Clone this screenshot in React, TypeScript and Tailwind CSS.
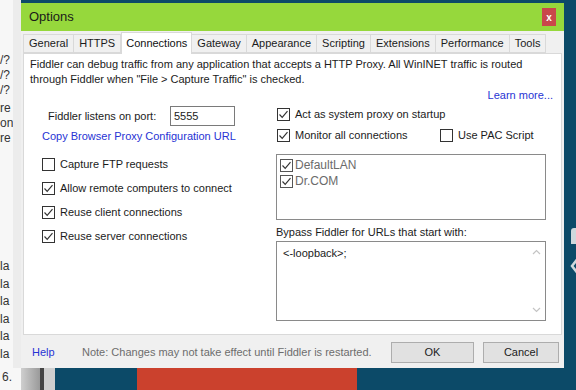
import React from 'react';

const tabs = ['General', 'HTTPS', 'Connections', 'Gateway', 'Appearance', 'Scripting', 'Extensions', 'Performance', 'Tools'];

const Check: React.FC<{ on?: boolean; gray?: boolean }> = ({ on, gray }) => (
  <svg width="13" height="13" viewBox="0 0 13 13" className="shrink-0">
    <rect x="0.5" y="0.5" width="12" height="12" fill="#fff" stroke={gray ? '#555' : '#333'} />
    {on && <path d="M2.5 6.5 L5.2 9.3 L10.5 3.2" fill="none" stroke="#333" strokeWidth="1.2" />}
  </svg>
);

const CheckRow: React.FC<{ on?: boolean; label: string }> = ({ on, label }) => (
  <div className="flex h-[24px] items-center gap-[5px]">
    <Check on={on} />
    <span>{label}</span>
  </div>
);

export default function App() {
  const side = ['/?', '/?', '/?', 're', 'on', 're'];
  const side2 = ['la', 'la', 'la', 'la', 'la', 'la'];
  return (
    <div
      className="relative h-[390px] w-[576px] overflow-hidden bg-[#0c4a68] text-[11px] text-[#1b1b1b]"
      style={{ fontFamily: '"Liberation Sans", Arial, sans-serif' }}
    >
      {/* desktop behind the dialog */}
      <div className="absolute left-0 top-0 flex h-[368px] w-[21px] bg-[#f7f7f7]">
        <div className="flex w-[13px] flex-col text-[12px] leading-[15px] text-[#333]">
          <div className="mt-[53px]">
            {side.slice(0, 3).map((s, i) => (
              <div key={i}>{s}</div>
            ))}
            <div className="mt-[3px]">
              {side.slice(3).map((s, i) => (
                <div key={i}>{s}</div>
              ))}
            </div>
          </div>
          <div className="mt-[112px] leading-[17.5px]">
            {side2.map((s, i) => (
              <div key={i}>{s}</div>
            ))}
          </div>
        </div>
        <div className="w-[8px] bg-[#ececec]" />
      </div>
      <div className="absolute bottom-0 left-0 flex h-[22px] w-[576px]">
        <div className="w-[21px] bg-[#f7f7f7] pl-[2px] text-[12px] text-[#333]">6.</div>
        <div className="w-[19px] bg-gradient-to-r from-[#cfcfcf] to-[#9a9a9a]" />
        <div className="w-[4px] bg-[#444]" />
        <div className="w-[11px] bg-[#cfcfcf]" />
        <div className="w-[82px] bg-[#0c4a68]" />
        <div className="w-[220px] bg-[#cb412d]" />
        <div className="flex-1 bg-[#0c4a68]" />
      </div>
      <div className="absolute right-0 top-[228px] h-[16px] w-[5px] rounded-tl-[3px] bg-[#cfd8dc]" />
      <div className="absolute right-0 top-[256px] h-[20px] w-[6px] overflow-hidden">
        <svg width="10" height="20" viewBox="0 0 10 20">
          <path d="M9 1 L2 10 L9 19" fill="none" stroke="#cfd8dc" strokeWidth="2.5" />
        </svg>
      </div>

      {/* dialog */}
      <div className="absolute left-[21px] top-[3px] flex h-[365px] w-[543px] flex-col bg-[#f0f0f0]">
        <div className="flex h-[28px] items-center justify-between bg-[#96d83c] pl-[8px] pr-[8px]">
          <span className="text-[13px] text-[#1a1a1a]">Options</span>
          <div className="flex h-[18px] w-[14px] items-center justify-center bg-[#c9474b] text-[10px] font-bold text-white">x</div>
        </div>

        <div className="flex h-[22px] items-end pl-[2px] pt-[2px]">
          {tabs.map((t) =>
            t === 'Connections' ? (
              <div key={t} className="relative -mb-px flex h-[22px] items-center border border-b-0 border-[#d9d9d9] bg-white px-[4px] text-[#111]">
                {t}
              </div>
            ) : (
              <div key={t} className="flex h-[19px] items-center border border-l-0 border-[#d9d9d9] bg-[#f0f0f0] px-[5px] first:border-l">
                {t}
              </div>
            )
          )}
        </div>

        <div className="mx-[2px] flex h-[282px] flex-col border border-[#d9d9d9] bg-white px-[6px]">
          <p className="mt-[3px] leading-[15px]">
            Fiddler can debug traffic from any application that accepts a HTTP Proxy. All WinINET traffic is routed through Fiddler when "File &gt; Capture Traffic" is checked.
          </p>
          <div className="flex h-[14px] justify-end pr-[2px] text-[#2733d4]">Learn more...</div>
          <div className="mt-[4px] flex">
            <div className="flex w-[246px] flex-col">
              <div className="flex h-[22px] items-center pl-[18px]">
                <span className="w-[122px]">Fiddler listens on port:</span>
                <div className="flex h-[20px] w-[65px] items-center border border-[#7a7a7a] pl-[3px]">5555</div>
              </div>
              <div className="flex h-[18px] items-center pl-[12px] text-[#2733d4]">Copy Browser Proxy Configuration URL</div>
              <div className="mt-[7px] pl-[12px]">
                <CheckRow label="Capture FTP requests" />
                <CheckRow on label="Allow remote computers to connect" />
                <CheckRow on label="Reuse client connections" />
                <CheckRow on label="Reuse server connections" />
              </div>
            </div>
            <div className="flex w-[270px] flex-col">
              <div className="flex h-[18px] items-center gap-[5px] pl-[1px]">
                <Check on />
                <span>Act as system proxy on startup</span>
              </div>
              <div className="mt-[3px] flex h-[18px] items-center pl-[1px]">
                <div className="flex w-[163px] items-center gap-[5px]">
                  <Check on />
                  <span>Monitor all connections</span>
                </div>
                <div className="flex items-center gap-[5px]">
                  <Check />
                  <span>Use PAC Script</span>
                </div>
              </div>
              <div className="mt-[10px] flex h-[66px] flex-col border border-[#8a8a8a] pl-[3px] pt-[2px] text-[12px] leading-[16px] text-[#6b6b6b]">
                <div className="flex items-center gap-[2px]">
                  <Check on gray />
                  <span>DefaultLAN</span>
                </div>
                <div className="flex items-center gap-[2px]">
                  <Check on gray />
                  <span>Dr.COM</span>
                </div>
              </div>
              <div className="mt-[3px] flex h-[18px] items-center">Bypass Fiddler for URLs that start with:</div>
              <div className="flex h-[80px] border border-[#8a8a8a]">
                <div className="flex-1 pl-[6px] pt-[3px]">&lt;-loopback&gt;;</div>
                <div className="flex w-[17px] flex-col items-center justify-between py-[7px]">
                  <svg width="9" height="6" viewBox="0 0 9 6">
                    <path d="M1 5 L4.5 1.5 L8 5" fill="none" stroke="#c4c4c4" strokeWidth="1.2" />
                  </svg>
                  <svg width="9" height="6" viewBox="0 0 9 6">
                    <path d="M1 1 L4.5 4.5 L8 1" fill="none" stroke="#c4c4c4" strokeWidth="1.2" />
                  </svg>
                </div>
              </div>
            </div>
          </div>
        </div>

        <div className="flex flex-1 items-center pl-[11px] pr-[5px] pt-[2px]">
          <span className="w-[50px] text-[#2733d4]">Help</span>
          <span className="text-[#6d6d6d]">Note: Changes may not take effect until Fiddler is restarted.</span>
          <div className="ml-auto flex gap-[9px]">
            <div className="flex h-[21px] w-[83px] items-center justify-center border border-[#adadad] bg-[#e1e1e1]">OK</div>
            <div className="flex h-[21px] w-[76px] items-center justify-center border border-[#adadad] bg-[#e1e1e1]">Cancel</div>
          </div>
        </div>
      </div>
    </div>
  );
}
